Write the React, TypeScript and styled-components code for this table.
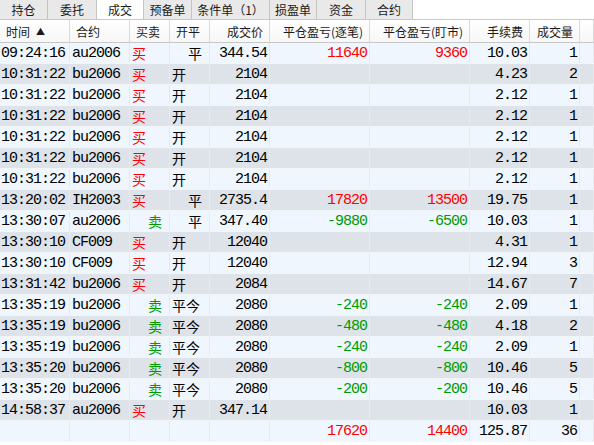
import React from "react";
import styled, { createGlobalStyle } from "styled-components";

const Global = createGlobalStyle`
  html, body { margin: 0; padding: 0; background: #ffffff; overflow: hidden; }
  body { font-family: "Noto Sans CJK SC", "Noto Sans", sans-serif; }
`;

const COLS = "70px 60px 40px 40px 60px 100px 100px 60px 50px 1fr";

const Page = styled.div`
  width: 594px;
  height: 445px;
  background: #ffffff;
  display: flex;
  flex-direction: column;
`;

const TabBar = styled.div`
  display: flex;
  height: 19px;
  border-bottom: 1px solid #c9c9c9;
  background: #ffffff;
`;

const Tab = styled.div<{ $w: number; $active?: boolean }>`
  width: ${(p) => p.$w}px;
  height: 19px;
  box-sizing: border-box;
  display: flex;
  align-items: center;
  justify-content: center;
  font-size: 12px;
  color: #1a1a1a;
  background: ${(p) => (p.$active ? "#ffffff" : "#e9e9e9")};
  border-right: 1px solid #c4c4c4;
  white-space: nowrap;
`;

const Header = styled.div`
  display: grid;
  grid-template-columns: ${COLS};
  height: 23px;
  box-sizing: border-box;
  border-bottom: 1px solid #c8c8c8;
  background: linear-gradient(#ffffff, #f7f7f7);
`;

const HeadCell = styled.div<{ $right?: boolean }>`
  display: flex;
  align-items: center;
  justify-content: ${(p) => (p.$right ? "flex-end" : "flex-start")};
  padding: 0 6px;
  font-size: 12px;
  color: #1a1a1a;
  border-right: 1px solid #dadada;
  white-space: nowrap;
  overflow: hidden;
`;

const Arrow = styled.span`
  font-size: 9px;
  margin-left: 6px;
`;

const Row = styled.div<{ $alt: boolean }>`
  display: grid;
  grid-template-columns: ${COLS};
  height: 21px;
  box-sizing: border-box;
  background: ${(p) => (p.$alt ? "#dee3ea" : "#eff6fe")};
  border-bottom: 1px solid #f3f6f9;
`;

const Cell = styled.div<{ $right?: boolean; $color?: string; $indent?: number; $cjk?: boolean }>`
  display: flex;
  align-items: center;
  justify-content: ${(p) => (p.$right ? "flex-end" : "flex-start")};
  padding: 0 2px 0 ${(p) => 2 + (p.$indent || 0)}px;
  font-family: ${(p) =>
    p.$cjk
      ? `"Noto Sans CJK SC", sans-serif`
      : `"Liberation Mono", "DejaVu Sans Mono", monospace`};
  font-size: ${(p) => (p.$cjk ? "14px" : "15px")};
  letter-spacing: ${(p) => (p.$cjk ? "0" : "-1px")};
  color: ${(p) => p.$color || "#000000"};
  border-right: 1px solid #e6eaee;
  white-space: nowrap;
  overflow: hidden;
`;

const RED = "#ff0000";
const GREEN = "#009a00";

const tabs = [
  { label: "持仓", w: 48 },
  { label: "委托", w: 49 },
  { label: "成交", w: 47, active: true },
  { label: "预备单", w: 48 },
  { label: "条件单（1）", w: 78 },
  { label: "损盈单", w: 47 },
  { label: "资金", w: 49 },
  { label: "合约", w: 47 },
];

type Trade = {
  t: string;
  c: string;
  side: "买" | "卖";
  oc: string;
  price: string;
  p1: string;
  p2: string;
  fee: string;
  vol: string;
};

const trades: Trade[] = [
  { t: "09:24:16", c: "au2006", side: "买", oc: "平", price: "344.54", p1: "11640", p2: "9360", fee: "10.03", vol: "1" },
  { t: "10:31:22", c: "bu2006", side: "买", oc: "开", price: "2104", p1: "", p2: "", fee: "4.23", vol: "2" },
  { t: "10:31:22", c: "bu2006", side: "买", oc: "开", price: "2104", p1: "", p2: "", fee: "2.12", vol: "1" },
  { t: "10:31:22", c: "bu2006", side: "买", oc: "开", price: "2104", p1: "", p2: "", fee: "2.12", vol: "1" },
  { t: "10:31:22", c: "bu2006", side: "买", oc: "开", price: "2104", p1: "", p2: "", fee: "2.12", vol: "1" },
  { t: "10:31:22", c: "bu2006", side: "买", oc: "开", price: "2104", p1: "", p2: "", fee: "2.12", vol: "1" },
  { t: "10:31:22", c: "bu2006", side: "买", oc: "开", price: "2104", p1: "", p2: "", fee: "2.12", vol: "1" },
  { t: "13:20:02", c: "IH2003", side: "买", oc: "平", price: "2735.4", p1: "17820", p2: "13500", fee: "19.75", vol: "1" },
  { t: "13:30:07", c: "au2006", side: "卖", oc: "平", price: "347.40", p1: "-9880", p2: "-6500", fee: "10.03", vol: "1" },
  { t: "13:30:10", c: "CF009", side: "买", oc: "开", price: "12040", p1: "", p2: "", fee: "4.31", vol: "1" },
  { t: "13:30:10", c: "CF009", side: "买", oc: "开", price: "12040", p1: "", p2: "", fee: "12.94", vol: "3" },
  { t: "13:31:42", c: "bu2006", side: "买", oc: "开", price: "2084", p1: "", p2: "", fee: "14.67", vol: "7" },
  { t: "13:35:19", c: "bu2006", side: "卖", oc: "平今", price: "2080", p1: "-240", p2: "-240", fee: "2.09", vol: "1" },
  { t: "13:35:19", c: "bu2006", side: "卖", oc: "平今", price: "2080", p1: "-480", p2: "-480", fee: "4.18", vol: "2" },
  { t: "13:35:19", c: "bu2006", side: "卖", oc: "平今", price: "2080", p1: "-240", p2: "-240", fee: "2.09", vol: "1" },
  { t: "13:35:20", c: "bu2006", side: "卖", oc: "平今", price: "2080", p1: "-800", p2: "-800", fee: "10.46", vol: "5" },
  { t: "13:35:20", c: "bu2006", side: "卖", oc: "平今", price: "2080", p1: "-200", p2: "-200", fee: "10.46", vol: "5" },
  { t: "14:58:37", c: "au2006", side: "买", oc: "开", price: "347.14", p1: "", p2: "", fee: "10.03", vol: "1" },
];

const pnlColor = (v: string) => (v.startsWith("-") ? GREEN : RED);

export default function App() {
  return (
    <Page>
      <Global />
      <TabBar>
        {tabs.map((t) => (
          <Tab key={t.label} $w={t.w} $active={t.active}>
            {t.label}
          </Tab>
        ))}
      </TabBar>
      <Header>
        <HeadCell>
          时间<Arrow>▲</Arrow>
        </HeadCell>
        <HeadCell>合约</HeadCell>
        <HeadCell>买卖</HeadCell>
        <HeadCell>开平</HeadCell>
        <HeadCell $right>成交价</HeadCell>
        <HeadCell $right>平仓盈亏(逐笔)</HeadCell>
        <HeadCell $right>平仓盈亏(盯市)</HeadCell>
        <HeadCell $right>手续费</HeadCell>
        <HeadCell $right>成交量</HeadCell>
        <HeadCell />
      </Header>
      {trades.map((r, i) => (
        <Row key={i} $alt={i % 2 === 1}>
          <Cell $indent={-1}>{r.t}</Cell>
          <Cell>{r.c}</Cell>
          <Cell $cjk $color={r.side === "买" ? RED : GREEN} $indent={r.side === "卖" ? 16 : 0}>
            {r.side}
          </Cell>
          <Cell $cjk $indent={r.oc === "平" ? 16 : 0}>
            {r.oc}
          </Cell>
          <Cell $right>{r.price}</Cell>
          <Cell $right $color={pnlColor(r.p1)}>{r.p1}</Cell>
          <Cell $right $color={pnlColor(r.p2)}>{r.p2}</Cell>
          <Cell $right>{r.fee}</Cell>
          <Cell $right>{r.vol}</Cell>
          <Cell />
        </Row>
      ))}
      <Row $alt={false}>
        <Cell />
        <Cell />
        <Cell />
        <Cell />
        <Cell />
        <Cell $right $color={RED}>17620</Cell>
        <Cell $right $color={RED}>14400</Cell>
        <Cell $right>125.87</Cell>
        <Cell $right>36</Cell>
        <Cell />
      </Row>
    </Page>
  );
}
